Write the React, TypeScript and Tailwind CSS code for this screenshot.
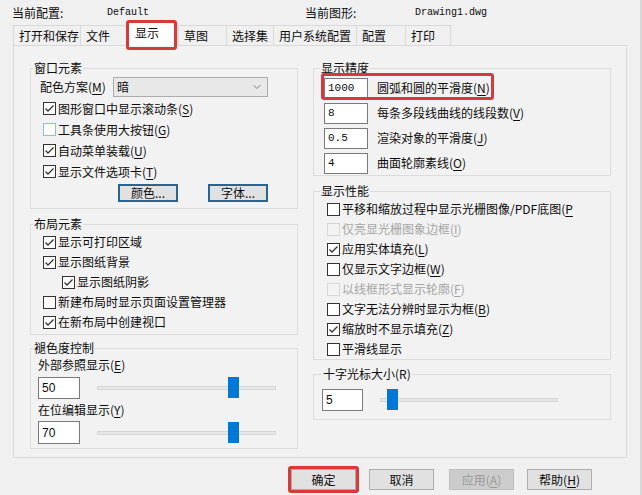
import { ChevronDown } from 'lucide-react';
import type { ReactNode } from 'react';

const tabs = [
  { label: '打开和保存', w: 'w-[67px]' },
  { label: '文件', w: 'w-[46px]' },
  { label: '显示', w: 'w-[52px]', active: true },
  { label: '草图', w: 'w-[48px]' },
  { label: '选择集', w: 'w-[47px]' },
  { label: '用户系统配置', w: 'w-[83px]' },
  { label: '配置', w: 'w-[49px]' },
  { label: '打印', w: 'w-[45px]' },
];

function Mn({ text, k, open }: { text: string; k?: string; open?: boolean }) {
  if (!k) return <>{text}</>;
  return (
    <>
      {text}(<span className="underline underline-offset-2">{k}</span>
      {open ? '' : ')'}
    </>
  );
}

function Check({ checked, disabled, hover }: { checked?: boolean; disabled?: boolean; hover?: boolean }) {
  const border = disabled ? 'border-[#d6d6d6] bg-[#f3f3f3]' : hover ? 'border-[#8fbde6] bg-white' : 'border-[#333333] bg-white';
  return (
    <span className={`w-[13px] h-[13px] border ${border} flex items-center justify-center shrink-0`}>
      {checked && (
        <svg width="11" height="11" viewBox="0 0 11 11">
          <polyline points="1.5,5.5 4,8 9.5,2.5" fill="none" stroke="#333" strokeWidth="1.3" />
        </svg>
      )}
    </span>
  );
}

function CheckRow({ label, k, open, checked, disabled, hover, className = '' }: { label: string; k?: string; open?: boolean; checked?: boolean; disabled?: boolean; hover?: boolean; className?: string }) {
  return (
    <div className={`h-[20px] flex items-center gap-[2px] whitespace-nowrap ${disabled ? 'text-[#a6a6a6]' : ''} ${className}`}>
      <Check checked={checked} disabled={disabled} hover={hover} />
      <span>
        <Mn text={label} k={k} open={open} />
      </span>
    </div>
  );
}

function Group({ title, className = '', legend = 'ml-[2px]', children }: { title: string; className?: string; legend?: string; children: ReactNode }) {
  return (
    <fieldset className={`border border-[#dcdcdc] min-w-0 ${className}`}>
      <legend className={`${legend} px-[1px] leading-[14px]`}>{title}</legend>
      {children}
    </fieldset>
  );
}

function Slider({ width, thumb }: { width: string; thumb: string }) {
  return (
    <div className={`relative h-[22px] ${width} flex items-center`}>
      <div className="w-full h-[4px] bg-[#e7e7e7] border border-[#d6d6d6]" />
      <div className={`absolute top-0 ${thumb} w-[11px] h-[21px] bg-[#0078d7]`} />
    </div>
  );
}

function Field({ value, className = '', mono }: { value: string; className?: string; mono?: boolean }) {
  return (
    <div
      className={`h-[21px] bg-white border border-[#7a7a7a] pl-[3px] flex items-center ${
        mono ? "font-['Liberation_Mono',monospace] text-[11px]" : "font-['Liberation_Sans',sans-serif] text-[12px]"
      } ${className}`}
    >
      {value}
    </div>
  );
}

function Button({ label, k, disabled, mark }: { label: string; k?: string; disabled?: boolean; mark?: boolean }) {
  return (
    <div className="relative w-[65px] h-[21px]">
      <div
        className={`w-full h-full border flex items-center justify-center ${
          disabled ? 'bg-[#cccccc] border-[#bfbfbf] text-[#9a9a9a]' : 'bg-[#e1e1e1] border-[#adadad]'
        }`}
      >
        <Mn text={label} k={k} />
      </div>
      {mark && <div className="absolute -left-[3px] -top-[3px] w-[71px] h-[27px] border-[3px] border-[#d63a3a] rounded-[3px]" />}
    </div>
  );
}

export default function App() {
  return (
    <div className="w-[642px] h-[495px] bg-[#f0f0f0] text-[12px] leading-[14px] text-[#0d0d0d] font-['Noto_Sans_CJK_SC',sans-serif] overflow-hidden border-r-2 border-[#d8d8d8]">
      {/* header */}
      <div className="h-[22px] flex items-start pt-[6px] pl-[12px] whitespace-nowrap">
        <span className="w-[95px]">当前配置:</span>
        <span className="w-[198px] font-['Liberation_Mono',monospace] text-[10px]">Default</span>
        <span className="w-[110px]">当前图形:</span>
        <span className="font-['Liberation_Mono',monospace] text-[10px]">Drawing1.dwg</span>
      </div>

      {/* tabs */}
      <div className="h-[23px] flex items-end pl-[13px]">
        {tabs.map((t) =>
          t.active ? (
            <div key={t.label} className={`relative z-10 -mb-px h-[24px] ${t.w} bg-white border border-b-0 border-[#d9d9d9] pl-[8px] pt-[3px]`}>
              {t.label}
              <div className="absolute -left-[1px] -top-[3px] w-[51px] h-[30px] border-[3px] border-[#d63a3a] rounded-[3px]" />
            </div>
          ) : (
            <div key={t.label} className={`h-[20px] ${t.w} border border-b-0 border-r-0 border-[#d9d9d9] pl-[5px] flex items-center whitespace-nowrap`}>
              {t.label}
            </div>
          ),
        )}
        <div className="h-[20px] border-l border-[#d9d9d9]" />
      </div>

      {/* panel */}
      <div className="ml-[13px] w-[614px] h-[413px] border border-[#d9d9d9] bg-[#f2f2f2] pl-[16px] pt-[15px] flex gap-[15px]">
        {/* left column */}
        <div className="w-[268px] flex flex-col">
          <Group title="窗口元素" className="h-[148px]">
            <div className="mt-[2px] h-[20px] pl-[9px] flex items-center">
              <span className="w-[73px]">
                <Mn text="配色方案" k="M" />
              </span>
              <div className="w-[155px] h-[20px] bg-[#e8e8e8] border border-[#adadad] flex items-center justify-between pl-[3px] pr-[4px]">
                <span>暗</span>
                <ChevronDown size={12} strokeWidth={1.5} className="text-[#555]" />
              </div>
            </div>
            <div className="mt-[1px] pl-[12px]">
              <CheckRow label="图形窗口中显示滚动条" k="S" checked className="h-[21px]" />
              <CheckRow label="工具条使用大按钮" k="G" hover className="h-[21px]" />
              <CheckRow label="自动菜单装载" k="U" checked className="h-[21px]" />
              <CheckRow label="显示文件选项卡" k="T" checked className="h-[21px]" />
            </div>
            <div className="mt-[2px] pl-[87px] flex gap-[30px]">
              <div className="w-[60px] h-[18px] border-2 border-[#2a6592] bg-[#e1e1e1] flex items-center justify-center">颜色...</div>
              <div className="w-[60px] h-[18px] border-2 border-[#2a6592] bg-[#e1e1e1] flex items-center justify-center">字体...</div>
            </div>
          </Group>

          <Group title="布局元素" className="mt-[8px] h-[118px]">
            <div className="mt-[1px] pl-[12px]">
              <CheckRow label="显示可打印区域" checked />
              <CheckRow label="显示图纸背景" checked />
              <CheckRow label="显示图纸阴影" checked className="pl-[19px]" />
              <CheckRow label="新建布局时显示页面设置管理器" />
              <CheckRow label="在新布局中创建视口" checked />
            </div>
          </Group>

          <Group title="褪色度控制" className="mt-[6px] h-[108px]">
            <div className="pl-[7px]">
              <div className="h-[20px] flex items-center">
                <Mn text="外部参照显示" k="E" />
              </div>
              <div className="mt-[2px] flex items-center">
                <Field value="50" className="w-[42px] h-[22px]" />
                <div className="ml-[17px]">
                  <Slider width="w-[179px]" thumb="left-[131px]" />
                </div>
              </div>
              <div className="mt-[2px] h-[18px] flex items-center">
                <Mn text="在位编辑显示" k="Y" />
              </div>
              <div className="mt-[2px] flex items-center">
                <Field value="70" className="w-[42px] h-[23px]" />
                <div className="ml-[17px]">
                  <Slider width="w-[179px]" thumb="left-[131px]" />
                </div>
              </div>
            </div>
          </Group>
        </div>

        {/* right column */}
        <div className="w-[298px] flex flex-col">
          <Group title="显示精度" legend="ml-[6px]" className="h-[115px]">
            <div className="mt-[3px] pl-[10px] flex flex-col gap-[5px]">
              <div className="relative h-[20px] flex items-center">
                <Field value="1000" mono className="w-[44px] h-[20px]" />
                <span className="ml-[9px]">
                  <Mn text="圆弧和圆的平滑度" k="N" />
                </span>
                <div className="absolute -left-[3px] -top-[5px] w-[173px] h-[27px] border-[3px] border-[#d63a3a] rounded-[3px]" />
              </div>
              <div className="h-[20px] flex items-center">
                <Field value="8" mono className="w-[44px] h-[20px]" />
                <span className="ml-[9px]">
                  <Mn text="每条多段线曲线的线段数" k="V" />
                </span>
              </div>
              <div className="h-[20px] flex items-center">
                <Field value="0.5" mono className="w-[44px] h-[20px]" />
                <span className="ml-[9px]">
                  <Mn text="渲染对象的平滑度" k="J" />
                </span>
              </div>
              <div className="h-[20px] flex items-center">
                <Field value="4" mono className="w-[44px] h-[20px]" />
                <span className="ml-[9px]">
                  <Mn text="曲面轮廓素线" k="O" />
                </span>
              </div>
            </div>
          </Group>

          <Group title="显示性能" legend="ml-[6px]" className="mt-[8px] h-[176px]">
            <div className="mt-[1px] pl-[13px] overflow-hidden">
              <CheckRow label="平移和缩放过程中显示光栅图像/PDF底图" k="P" open />
              <CheckRow label="仅亮显光栅图象边框" k="I" disabled />
              <CheckRow label="应用实体填充" k="L" checked />
              <CheckRow label="仅显示文字边框" k="W" />
              <CheckRow label="以线框形式显示轮廓" k="F" disabled />
              <CheckRow label="文字无法分辨时显示为框" k="B" />
              <CheckRow label="缩放时不显示填充" k="Z" checked />
              <CheckRow label="平滑线显示" />
            </div>
          </Group>

          <Group title="十字光标大小(R)" legend="ml-[8px]" className="mt-[7px] h-[53px]">
            <div className="mt-[8px] pl-[8px] flex items-center">
              <Field value="5" className="w-[41px] h-[22px]" />
              <div className="ml-[17px]">
                <Slider width="w-[178px]" thumb="left-[7px]" />
              </div>
            </div>
          </Group>
        </div>
      </div>

      {/* buttons */}
      <div className="mt-[11px] pl-[291px] flex">
        <Button label="确定" mark />
        <div className="ml-[13px]">
          <Button label="取消" />
        </div>
        <div className="ml-[15px]">
          <Button label="应用" k="A" disabled />
        </div>
        <div className="ml-[13px]">
          <Button label="帮助" k="H" />
        </div>
      </div>
    </div>
  );
}
